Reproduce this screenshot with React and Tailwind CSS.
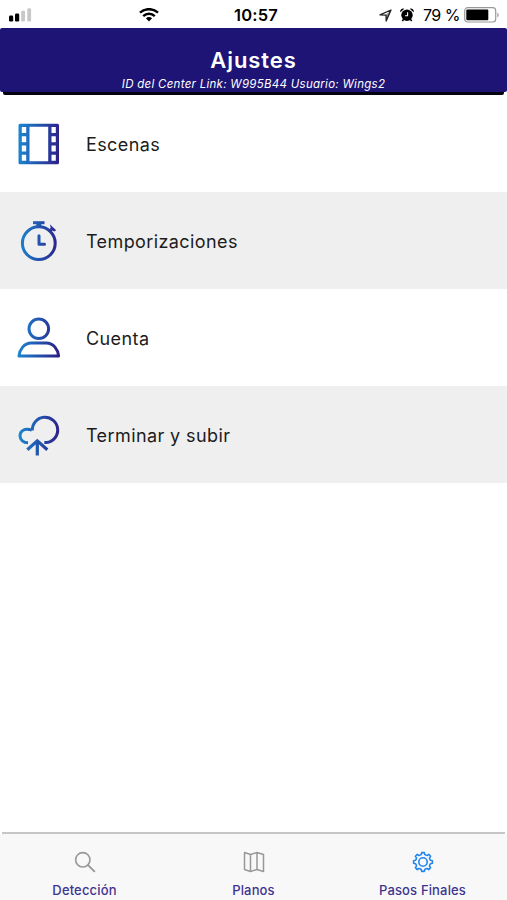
import React from "react";

function BrandGradient({ id }) {
  return (
    <defs>
      <linearGradient id={id} gradientUnits="userSpaceOnUse" x1="2" y1="22" x2="44" y2="24">
        <stop offset="0" stopColor="#1c86cf" />
        <stop offset="0.5" stopColor="#2354ae" />
        <stop offset="1" stopColor="#2f1d86" />
      </linearGradient>
    </defs>
  );
}

function FilmIcon() {
  return (
    <svg width="46" height="46" viewBox="0 0 46 46" fill="none">
      <BrandGradient id="film" />
      <path
        fill="url(#film)"
        fillRule="evenodd"
        d="M4 2.700h37.500a1.500 1.500 0 0 1 1.500 1.500v37.500a1.500 1.500 0 0 1-1.500 1.500h-37.500a1.500 1.500 0 0 1-1.500-1.500v-37.500a1.500 1.500 0 0 1 1.500-1.500z
          M13.500 5.700v34.500h18.700v-34.500z
          M5.800 6v6h4.400v-6z M5.800 15.300v6h4.400v-6z M5.800 24.500v6h4.400v-6z M5.800 33.800v6h4.400v-6z
          M35.500 6v6h4.300v-6z M35.500 15.300v6h4.300v-6z M35.500 24.500v6h4.300v-6z M35.500 33.800v6h4.300v-6z"
      />
    </svg>
  );
}

function StopwatchIcon() {
  return (
    <svg width="46" height="46" viewBox="0 0 46 46" fill="none" stroke="url(#watch)">
      <BrandGradient id="watch" />
      <circle cx="22.800" cy="25.200" r="16.400" strokeWidth="3" />
      <path strokeWidth="3" d="M17 4.700h11.500" />
      <path strokeWidth="5" d="M22.800 5v4" />
      <path fill="url(#watch)" stroke="none" d="M33.800 6.300l6.400 6-2 1.300-2-1-2 1.300-1.800-1.500 2.300-2.600z" />
      <path strokeWidth="3" strokeLinecap="round" strokeLinejoin="round" d="M23 17.700v8.500h5.500" />
    </svg>
  );
}

function UserIcon() {
  return (
    <svg width="46" height="46" viewBox="0 0 46 46" fill="none" stroke="url(#user)" strokeWidth="3">
      <BrandGradient id="user" />
      <circle cx="22.800" cy="13.800" r="9.800" />
      <path strokeLinejoin="round" d="M3 41c.6-6.300 5-13 12.300-13h15c7.300 0 11.700 6.700 12.300 13z" />
    </svg>
  );
}

function UploadIcon() {
  return (
    <svg width="46" height="46" viewBox="0 0 46 46" fill="none" stroke="url(#cloud)" strokeWidth="3">
      <BrandGradient id="cloud" />
      <path d="M12 30.800C7.500 30.800 4 27.800 4 23.800C4 19 8.500 15.500 15.800 18.200" />
      <path d="M16.300 18.500A12.700 12.700 0 1 1 30.500 30.600H28.300" />
      <path strokeWidth="3.200" d="M21.300 43.500v-14M11.300 37.800l10-9 10 9" />
    </svg>
  );
}

function SearchIcon() {
  return (
    <svg width="22" height="22" viewBox="0 0 22 22" fill="none" stroke="#989898" strokeWidth="1.600">
      <circle cx="8.800" cy="8.800" r="7.200" />
      <path strokeWidth="1.900" d="M13.800 13.800l7 7" />
    </svg>
  );
}

function MapIcon() {
  return (
    <svg width="22" height="22" viewBox="0 0 22 22" fill="none" stroke="#989898" strokeWidth="1.500" strokeLinejoin="round">
      <path d="M1.500 1.500l6 2 6.500-2 6.500 2v17l-6.500-2-6.500 2-6-2zM7.500 3.500v17M14 1.500v17" />
    </svg>
  );
}

// Eight rounded teeth around the hub
const teeth = [0, 45, 90, 135, 180, 225, 270, 315];

function GearIcon() {
  const rad = (a) => (a * Math.PI) / 180;
  const pt = (r, a) => `${(11 + r * Math.cos(rad(a))).toFixed(2)} ${(11 + r * Math.sin(rad(a))).toFixed(2)}`;
  const d = teeth
    .map((a, i) => `${i ? "L" : "M"}${pt(7.7, a - 13)}L${pt(9.5, a - 8)}L${pt(9.5, a + 8)}L${pt(7.7, a + 13)}Q${pt(7.1, a + 22.5)} ${pt(7.7, a + 32)}`)
    .join("");
  return (
    <svg width="22" height="22" viewBox="0 0 22 22" fill="none" stroke="#2485ee" strokeWidth="1.600" strokeLinejoin="round">
      <path d={`${d}Z`} />
      <circle cx="11" cy="11" r="4.200" />
    </svg>
  );
}

function StatusBar() {
  return (
    <div className="grid h-7 grid-cols-[1fr_auto_1fr] items-center pt-[2px] text-black">
      <div className="flex items-center">
        <svg className="ml-2" width="24" height="14" viewBox="0 0 24 14">
          <rect x="1" y="7.500" width="4.200" height="6" rx="1.300" />
          <rect x="7" y="5.500" width="4.200" height="8" rx="1.300" />
          <rect x="13.200" y="2.700" width="3.800" height="10.800" rx="1.300" fill="#c8c8c8" />
          <rect x="19.300" y="0.300" width="3.800" height="13.200" rx="1.300" fill="#c8c8c8" />
        </svg>
        <svg className="ml-[107px]" width="20" height="14" viewBox="0 0 20 14" fill="none" stroke="#000" strokeWidth="2.500">
          <path d="M1 4.700c5-4.700 13-4.700 18 0M4.200 8.100c3.300-3 8.300-3 11.600 0" />
          <path fill="#000" stroke="none" d="M10 13.500l-3.100-3.200c1.700-1.600 4.500-1.600 6.200 0z" />
        </svg>
      </div>
      <span className="pl-[5px] text-[16.5px] leading-none font-semibold tracking-[0.2px]">10:57</span>
      <div className="flex items-center justify-end pr-[7px]">
        <svg width="13" height="13" viewBox="0 0 13 13" fill="none" stroke="#222" strokeWidth="1.300" strokeLinejoin="round">
          <path d="M12 1L1 5.800l6 .3.200 6z" />
          <path fill="#222" stroke="none" d="M12 1L7 6.100l.2 6z" opacity="0.500" />
        </svg>
        <svg className="ml-[8px]" width="14" height="14" viewBox="0 0 14 14">
          <circle cx="7" cy="7.200" r="5.700" />
          <path d="M.3 4.300A3 3 0 0 1 4.300.7zM13.700 4.300A3 3 0 0 0 9.700.7z" />
          <path stroke="#000" strokeWidth="1.600" d="M3.500 11.500l-1.200 1.500M10.500 11.500l1.200 1.500" />
          <path fill="none" stroke="#fff" strokeWidth="1.100" d="M7.600 4.300v3.400H5" />
        </svg>
        <span className="ml-[9px] text-[16px] leading-none tracking-[-0.5px] whitespace-pre">79 %</span>
        <svg className="ml-[4px]" width="36" height="16" viewBox="0 0 36 16">
          <rect x="0.700" y="0.700" width="31" height="14.300" rx="3" fill="#fff" stroke="#999" strokeWidth="1.200" />
          <rect x="2.300" y="2.600" width="22" height="10.600" rx="1" />
          <path fill="#999" d="M33.300 5.500c1.800.8 1.800 4.200 0 5z" />
        </svg>
      </div>
    </div>
  );
}

const items = [
  { label: "Escenas", Icon: FilmIcon },
  { label: "Temporizaciones", Icon: StopwatchIcon },
  { label: "Cuenta", Icon: UserIcon },
  { label: "Terminar y subir", Icon: UploadIcon },
];

const tabs = [
  { label: "Detección", Icon: SearchIcon },
  { label: "Planos", Icon: MapIcon },
  { label: "Pasos Finales", Icon: GearIcon },
];

export default function App() {
  return (
    <div className="flex h-[900px] w-[507px] flex-col overflow-hidden bg-white font-['Inter',sans-serif]">
      <StatusBar />

      <header>
        <div className="flex h-16 flex-col items-center rounded-[2px] bg-[#1d1475] pt-[18px] text-white">
          <h1 className="text-[22px] leading-[28px] font-semibold tracking-[0.9px]">Ajustes</h1>
          <p className="mt-[3px] text-[11.5px] leading-[14px] tracking-[0.28px] italic">
            ID del Center Link: W995B44 Usuario: Wings2
          </p>
        </div>
        <div className="mx-[3px] h-[3px] rounded-b-[2px] bg-[#05030f]" />
      </header>

      <ul className="flex-1">
        {items.map(({ label, Icon }) => (
          <li key={label} className="flex h-[97px] items-center bg-white pl-4 even:bg-[#efefef]">
            <Icon />
            <span className="ml-6 pt-[2px] text-[18px] leading-6 tracking-[0.4px] text-[#1c1c1c]">{label}</span>
          </li>
        ))}
      </ul>

      <nav className="bg-[#f8f8f8]">
        <div className="bg-white px-[2px]">
          <div className="h-[2px] bg-[#c6c6c6]" />
        </div>
        <div className="grid h-[66px] grid-cols-3">
          {tabs.map(({ label, Icon }) => (
            <div key={label} className="flex flex-col items-center pt-[17px]">
              <Icon />
              <span className="mt-[9px] text-[13px] leading-4 font-medium tracking-[0.15px] text-[#3e3490]">{label}</span>
            </div>
          ))}
        </div>
      </nav>
    </div>
  );
}
